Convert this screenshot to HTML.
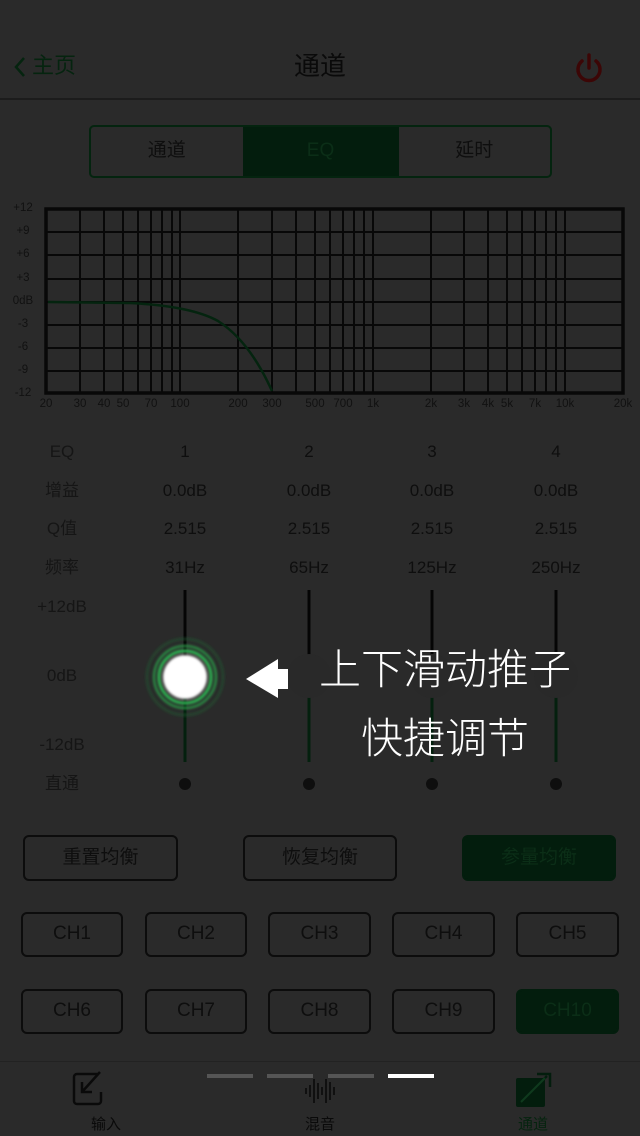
<!DOCTYPE html>
<html><head><meta charset="utf-8"><style>
*{margin:0;padding:0;box-sizing:border-box}
body{width:640px;height:1136px;background:#2a2a2a;font-family:"Liberation Sans","Noto Sans CJK SC",sans-serif;color:#0e0e0e;position:relative;overflow:hidden;line-height:1.2}
.a{position:absolute}
.c{text-align:center}
.btn{position:absolute;border:2px solid #0c0c0c;border-radius:6px;display:flex;align-items:center;justify-content:center;font-size:19px;color:#0e0e0e}
.g{background:#031d0d;border-color:#031d0d;color:#0b2e17}
.lbl{position:absolute;left:22px;width:80px;text-align:center;font-size:17px;color:#151515;line-height:20px}
.val{position:absolute;width:100px;text-align:center;font-size:17px;color:#0e0e0e;line-height:20px}
</style></head><body>
<svg class="a" style="left:12px;top:56px" width="16" height="22"><path d="M12 2 L4 11 L12 20" stroke="#05240f" stroke-width="2.5" fill="none"/></svg>
<div class="a" style="left:32px;top:52px;font-size:22px;color:#05240f;line-height:28px">主页</div>
<div class="a c" style="left:0;width:640px;top:49px;font-size:26px;color:#0a0a0a;line-height:34px">通道</div>
<svg class="a" style="left:572px;top:52px" width="34" height="32"><path d="M10 9 A11 11 0 1 0 24 9" stroke="#3c0606" stroke-width="3.5" fill="none" stroke-linecap="round"/><path d="M17 3 V16" stroke="#3c0606" stroke-width="3.5" stroke-linecap="round"/></svg>
<div class="a" style="left:0;top:98px;width:640px;height:2px;background:#1c1c1c"></div>

<div class="a" style="left:89px;top:125px;width:463px;height:53px;border:2px solid #04240f;border-radius:5px;overflow:hidden;display:flex">
<div style="flex:1;display:flex;align-items:center;justify-content:center;font-size:19px">通道</div>
<div style="width:156px;background:#031d0d;display:flex;align-items:center;justify-content:center;font-size:19px;color:#0b2e17">EQ</div>
<div style="flex:1;display:flex;align-items:center;justify-content:center;font-size:19px">延时</div>
</div>

<svg class="a" style="left:0;top:195px" width="640" height="220" font-family="Liberation Sans" font-size="11.5" fill="#111">
<g stroke="#080808" stroke-width="2">
<line x1="46" x2="623" y1="37" y2="37"/><line x1="46" x2="623" y1="60" y2="60"/><line x1="46" x2="623" y1="84" y2="84"/><line x1="46" x2="623" y1="107" y2="107"/><line x1="46" x2="623" y1="130" y2="130"/><line x1="46" x2="623" y1="153" y2="153"/><line x1="46" x2="623" y1="176" y2="176"/>
<path d="M80 15V198M104 15V198M123 15V198M138 15V198M151 15V198M162 15V198M172 15V198M180 15V198M238 15V198M272 15V198M296 15V198M315 15V198M330 15V198M343 15V198M354 15V198M364 15V198M373 15V198M431 15V198M464 15V198M488 15V198M507 15V198M522 15V198M535 15V198M546 15V198M556 15V198M565 15V198"/>
</g>
<rect x="46" y="14" width="577" height="184" fill="none" stroke="#080808" stroke-width="3.5"/>
<path d="M48 107 L130 108 C170 110 200 116 218 126 C240 140 258 165 272 196" stroke="#04240f" stroke-width="2.5" fill="none"/>
<g text-anchor="middle"><text x="23" y="16">+12</text><text x="23" y="39">+9</text><text x="23" y="62">+6</text><text x="23" y="86">+3</text><text x="23" y="109">0dB</text><text x="23" y="132">-3</text><text x="23" y="155">-6</text><text x="23" y="178">-9</text><text x="23" y="201">-12</text>
<text x="46" y="212">20</text><text x="80" y="212">30</text><text x="104" y="212">40</text><text x="123" y="212">50</text><text x="151" y="212">70</text><text x="180" y="212">100</text><text x="238" y="212">200</text><text x="272" y="212">300</text><text x="315" y="212">500</text><text x="343" y="212">700</text><text x="373" y="212">1k</text><text x="431" y="212">2k</text><text x="464" y="212">3k</text><text x="488" y="212">4k</text><text x="507" y="212">5k</text><text x="535" y="212">7k</text><text x="565" y="212">10k</text><text x="623" y="212">20k</text></g>
</svg>

<div class="lbl" style="top:442px">EQ</div>
<div class="lbl" style="top:481px">增益</div>
<div class="lbl" style="top:519px">Q值</div>
<div class="lbl" style="top:558px">频率</div>
<div class="val" style="left:135px;top:442px">1</div><div class="val" style="left:259px;top:442px">2</div><div class="val" style="left:382px;top:442px">3</div><div class="val" style="left:506px;top:442px">4</div>
<div class="val" style="left:135px;top:481px">0.0dB</div><div class="val" style="left:259px;top:481px">0.0dB</div><div class="val" style="left:382px;top:481px">0.0dB</div><div class="val" style="left:506px;top:481px">0.0dB</div>
<div class="val" style="left:135px;top:519px">2.515</div><div class="val" style="left:259px;top:519px">2.515</div><div class="val" style="left:382px;top:519px">2.515</div><div class="val" style="left:506px;top:519px">2.515</div>
<div class="val" style="left:135px;top:558px">31Hz</div><div class="val" style="left:259px;top:558px">65Hz</div><div class="val" style="left:382px;top:558px">125Hz</div><div class="val" style="left:506px;top:558px">250Hz</div>
<div class="lbl" style="top:597px">+12dB</div>
<div class="lbl" style="top:666px">0dB</div>
<div class="lbl" style="top:735px">-12dB</div>
<div class="lbl" style="top:774px">直通</div>

<svg class="a" style="left:0;top:580px" width="640" height="220">
<defs><filter id="b" x="-50%" y="-50%" width="200%" height="200%"><feGaussianBlur stdDeviation="1.2"/></filter></defs>
<g stroke-width="3">
<path d="M185 10V97M309 10V97M432 10V97M556 10V97" stroke="#050505"/>
<path d="M185 97V182M309 97V182M432 97V182M556 97V182" stroke="#04200e"/>
</g>
<g fill="#292929"><circle cx="309" cy="96" r="22"/><circle cx="432" cy="96" r="22"/><circle cx="556" cy="96" r="22"/></g>
<g fill="#0e0e0e"><circle cx="185" cy="204" r="6"/><circle cx="309" cy="204" r="6"/><circle cx="432" cy="204" r="6"/><circle cx="556" cy="204" r="6"/></g>
<g filter="url(#b)">
<circle cx="185" cy="97" r="38" fill="none" stroke="#1f5a30" stroke-width="3" opacity=".5"/>
<circle cx="185" cy="97" r="31" fill="none" stroke="#2aa04a" stroke-width="2"/>
<circle cx="185" cy="97" r="26" fill="none" stroke="#2fb552" stroke-width="3"/>
<circle cx="185" cy="97" r="22" fill="#fff"/>
</g>
<path d="M246 99 L278 79 V89 H288 V109 H278 V118 Z" fill="#fff"/>
</svg>
<div class="a c" style="left:295px;width:300px;top:640px;font-size:42px;line-height:54px;color:#fff;font-family:'Noto Sans CJK SC',sans-serif;font-weight:300">上下滑动推子</div>
<div class="a c" style="left:295px;width:300px;top:709px;font-size:42px;line-height:54px;color:#fff;font-family:'Noto Sans CJK SC',sans-serif;font-weight:300">快捷调节</div>

<div class="btn" style="left:23px;top:835px;width:155px;height:46px">重置均衡</div>
<div class="btn" style="left:243px;top:835px;width:154px;height:46px">恢复均衡</div>
<div class="btn g" style="left:462px;top:835px;width:154px;height:46px">参量均衡</div>
<div class="btn" style="left:21px;top:912px;width:102px;height:45px">CH1</div>
<div class="btn" style="left:145px;top:912px;width:102px;height:45px">CH2</div>
<div class="btn" style="left:268px;top:912px;width:103px;height:45px">CH3</div>
<div class="btn" style="left:392px;top:912px;width:103px;height:45px">CH4</div>
<div class="btn" style="left:516px;top:912px;width:103px;height:45px">CH5</div>
<div class="btn" style="left:21px;top:989px;width:102px;height:45px">CH6</div>
<div class="btn" style="left:145px;top:989px;width:102px;height:45px">CH7</div>
<div class="btn" style="left:268px;top:989px;width:103px;height:45px">CH8</div>
<div class="btn" style="left:392px;top:989px;width:103px;height:45px">CH9</div>
<div class="btn g" style="left:516px;top:989px;width:103px;height:45px">CH10</div>

<div class="a" style="left:0;top:1061px;width:640px;height:1px;background:#222"></div>
<div class="a" style="left:207px;top:1074px;width:46px;height:4px;background:#555"></div>
<div class="a" style="left:267px;top:1074px;width:46px;height:4px;background:#555"></div>
<div class="a" style="left:328px;top:1074px;width:46px;height:4px;background:#555"></div>
<div class="a" style="left:388px;top:1074px;width:46px;height:4px;background:#fff"></div>
<svg class="a" style="left:0;top:1070px" width="640" height="42">
<path d="M98 4H77A3 3 0 0 0 74 7V31A3 3 0 0 0 77 34H98A3 3 0 0 0 101 31V22" stroke="#0a0a0a" stroke-width="2.5" fill="none"/>
<path d="M100 2L82 22M82 12V22H92" stroke="#0a0a0a" stroke-width="2.5" fill="none"/>
<path d="M247 19V25M251 16V28M255 10V34M259 14V30M263 18V26M267 10V34M271 13V31M275 18V26" stroke="#0a0a0a" stroke-width="1.6" transform="translate(59 -1)"/>
<rect x="516" y="8" width="29" height="29" rx="2" fill="#031d0d"/>
<path d="M521 32L547 6M537 4H550V17" stroke="#031d0d" stroke-width="2.5" fill="none"/>
<path d="M521 32L545 8" stroke="#0f3a1d" stroke-width="2"/>
</svg>
<div class="a c" style="left:66px;width:80px;top:1116px;font-size:15px;color:#0a0a0a">输入</div>
<div class="a c" style="left:280px;width:80px;top:1116px;font-size:15px;color:#0a0a0a">混音</div>
<div class="a c" style="left:493px;width:80px;top:1116px;font-size:15px;color:#05240f">通道</div>
</body></html>
